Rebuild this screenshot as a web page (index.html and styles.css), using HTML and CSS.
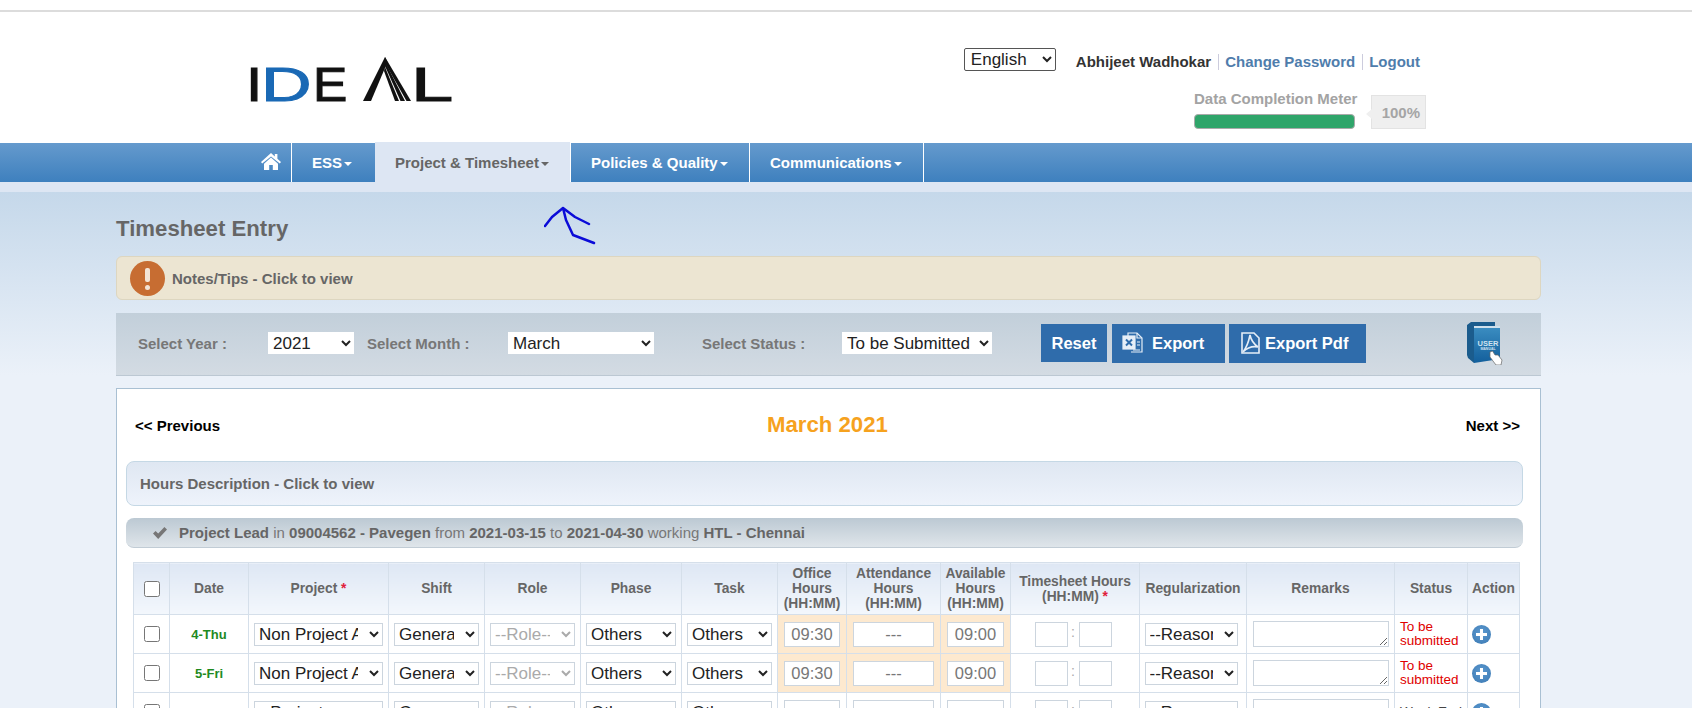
FILE: index.html
```html
<!DOCTYPE html>
<html>
	<head>
		<meta charset="utf-8">
		<title>Timesheet Entry</title>
		<link rel="stylesheet" href="styles.css">
	</head>
	<body>
		<div class="page">
			<div class="topline"></div>
			<div class="header">
				<div class="logo">
					<span class="lg lg-i">I</span>
					<span class="lg lg-d">D</span>
					<span class="lg lg-e">E</span>
					<!-- striped peak of the logo -->
					<svg class="lg-peak" width="49" height="44" viewBox="0 0 49 44">
						<path fill="#111" d="M23 0 L25.5 5 L9 44 H1 Z"/>
						<path fill="#111" d="M23 0 L49 44 H44.5 L22.5 5 Z"/>
						<path fill="#111" d="M23.5 5.5 L43 44 H38.5 L23 9 Z"/>
						<path fill="#111" d="M23 10 L37 44 H33 L22 14 Z"/>
					</svg>
					<span class="lg lg-l">L</span>
				</div>
				<div class="userbox">
					<div class="userrow">
						<select class="lang"><option>English</option></select>
						<span class="uname">Abhijeet Wadhokar</span>
						<a class="ulink" href="#">Change Password</a>
						<a class="ulink" href="#">Logout</a>
					</div>
					<div class="meter">
						<div class="meter-left">
							<div class="meter-label">Data Completion Meter</div>
							<div class="meter-bar"></div>
						</div>
						<div class="meter-val">100%</div>
					</div>
				</div>
			</div>

			<div class="nav">
				<a class="nav-home" href="#">
					<svg width="20" height="17" viewBox="0 0 20 17"><path fill="#fff" d="M10 0 L13.8 3.4 V1 H16.4 V5.7 L20 9 L18.8 10.6 L10 3.4 L1.2 10.6 L0 9 Z M3 10.8 L10 4.4 L17 10.8 V17 H11.8 V12 H8.2 V17 H3 Z"/></svg>
				</a>
				<a class="nav-item ess" href="#">ESS<i class="caret"></i></a>
				<a class="nav-item active" href="#">Project &amp; Timesheet<i class="caret"></i></a>
				<a class="nav-item policies" href="#">Policies &amp; Quality<i class="caret"></i></a>
				<a class="nav-item comm" href="#">Communications<i class="caret"></i></a>
			</div>
			<div class="strip"></div>

			<!-- hand drawn arrow on the screenshot -->
			<svg class="scribble" width="60" height="42" viewBox="0 0 60 42"><path fill="none" stroke="#0b0bd8" stroke-width="2.5" stroke-linejoin="round" stroke-linecap="round" d="M1 20 L8 11 L19 2 L31 11 L45 18 M19 2 L22 14 L29 29 L50 37"/></svg>

			<div class="content">
				<h1 class="title">Timesheet Entry</h1>

				<div class="notes">
					<span class="notes-icon"><i class="bang"></i><i class="dot"></i></span>
					<span>Notes/Tips - Click to view</span>
				</div>

				<div class="filter">
					<label class="flabel l1">Select Year :</label>
					<select class="fsel s1"><option>2021</option></select>
					<label class="flabel l2">Select Month :</label>
					<select class="fsel s2"><option>March</option></select>
					<label class="flabel l3">Select Status :</label>
					<select class="fsel s3"><option>To be Submitted</option></select>
					<button class="btn b-reset">Reset</button>
					<button class="btn b-export">
						<svg width="22" height="22" viewBox="0 0 22 22" fill="none" stroke="#e6eef7" stroke-width="1.2"><path d="M6 4 V1 H15 L20 6 V20 H9"/><path d="M15 1 V6 H20"/><rect x="1" y="4" width="12" height="13" fill="#e6eef7"/><path d="M4 7.5 L10 13.5 M10 7.5 L4 13.5" stroke="#2f6cab" stroke-width="2"/><path d="M15 10 H18 M15 13 H18 M11 18 H18"/></svg>
						Export
					</button>
					<button class="btn b-pdf">
						<svg width="19" height="22" viewBox="0 0 19 22" fill="none" stroke="#e6eef7" stroke-width="1.6"><path d="M1 1 H13 L18 6 V21 H1 Z"/><path d="M9 3 C8 8 6 15 2 20 C6 16 12 14 17 15 C13 12 10 8 9 3 Z"/></svg>
						Export Pdf
					</button>
					<svg class="book" width="36" height="44" viewBox="0 0 36 44">
						<defs>
							<linearGradient id="bookfront" x1="0" y1="0" x2="0" y2="1">
								<stop offset="0" stop-color="#3a8cc0"/>
								<stop offset="1" stop-color="#135f9c"/>
							</linearGradient>
						</defs>
						<path fill="#1b5c8d" d="M0 4 L4 1 H28 V5 L7 6 V42 L1 37 L0 34 Z"/>
						<path fill="#cfe0ec" d="M7 5 H33 V7 H7 Z"/>
						<path fill="url(#bookfront)" d="M7 7 H33 V38 L7 42 Z"/>
						<text x="21" y="25" class="book-text">USER</text>
						<text x="21" y="29" class="book-sub">MANUAL</text>
						<path fill="#fff" stroke="#666" stroke-width="0.7" d="M23 31 L25.5 30 L28 34 L31 34 L35 39 L34 44 L29 44 L23 36 Z"/>
					</svg>
				</div>

				<div class="panel">
					<div class="monthrow">
						<a class="mlink" href="#">&lt;&lt; Previous</a>
						<span class="month">March 2021</span>
						<a class="mlink" href="#">Next &gt;&gt;</a>
					</div>

					<div class="hours">Hours Description - Click to view</div>

					<div class="assign">
						<svg width="14" height="12" viewBox="0 0 14 12"><path fill="#777" d="M0 6.5 L2.6 4 L5.2 6.6 L11.4 0 L14 2.5 L5.2 12 Z"/></svg>
						<span><b>Project Lead</b> in <b>09004562 - Pavegen</b> from <b>2021-03-15</b> to <b>2021-04-30</b> working <b>HTL - Chennai</b></span>
					</div>

					<table class="tsheet">
						<thead>
							<tr>
								<th class="c-chk"><input type="checkbox"></th>
								<th class="c-date">Date</th>
								<th class="c-proj">Project <em>*</em></th>
								<th class="c-shift">Shift</th>
								<th class="c-role">Role</th>
								<th class="c-phase">Phase</th>
								<th class="c-task">Task</th>
								<th class="c-office">Office Hours (HH:MM)</th>
								<th class="c-att">Attendance Hours (HH:MM)</th>
								<th class="c-avail">Available Hours (HH:MM)</th>
								<th class="c-ts">Timesheet Hours (HH:MM) <em>*</em></th>
								<th class="c-reg">Regularization</th>
								<th class="c-rem">Remarks</th>
								<th class="c-status">Status</th>
								<th class="c-action">Action</th>
							</tr>
						</thead>
						<tbody>
							<tr>
								<td><input type="checkbox"></td>
								<td class="date green">4-Thu</td>
								<td><select class="tsel"><option>Non Project Activity</option></select></td>
								<td><select class="tsel"><option>General</option></select></td>
								<td><select class="tsel" disabled><option>--Role--</option></select></td>
								<td><select class="tsel"><option>Others</option></select></td>
								<td><select class="tsel"><option>Others</option></select></td>
								<td class="warm"><input class="box" value="09:30"></td>
								<td class="warm"><input class="box" value="---"></td>
								<td class="warm"><input class="box" value="09:00"></td>
								<td class="tcell"><input class="box small"><span class="colon">:</span><input class="box small"></td>
								<td><select class="tsel reason"><option>--Reason--</option></select></td>
								<td><textarea class="rem"></textarea></td>
								<td class="status red">To be submitted</td>
								<td class="act"><span class="plus"></span></td>
							</tr>
							<tr>
								<td><input type="checkbox"></td>
								<td class="date green">5-Fri</td>
								<td><select class="tsel"><option>Non Project Activity</option></select></td>
								<td><select class="tsel"><option>General</option></select></td>
								<td><select class="tsel" disabled><option>--Role--</option></select></td>
								<td><select class="tsel"><option>Others</option></select></td>
								<td><select class="tsel"><option>Others</option></select></td>
								<td class="warm"><input class="box" value="09:30"></td>
								<td class="warm"><input class="box" value="---"></td>
								<td class="warm"><input class="box" value="09:00"></td>
								<td class="tcell"><input class="box small"><span class="colon">:</span><input class="box small"></td>
								<td><select class="tsel reason"><option>--Reason--</option></select></td>
								<td><textarea class="rem"></textarea></td>
								<td class="status red">To be submitted</td>
								<td class="act"><span class="plus"></span></td>
							</tr>
							<tr>
								<td><input type="checkbox"></td>
								<td class="date red">6-Sat</td>
								<td><select class="tsel"><option>--Project--</option></select></td>
								<td><select class="tsel"><option>General</option></select></td>
								<td><select class="tsel" disabled><option>--Role--</option></select></td>
								<td><select class="tsel"><option>Others</option></select></td>
								<td><select class="tsel"><option>Others</option></select></td>
								<td><input class="box"></td>
								<td><input class="box"></td>
								<td><input class="box"></td>
								<td class="tcell"><input class="box small"><span class="colon">:</span><input class="box small"></td>
								<td><select class="tsel reason"><option>--Reason--</option></select></td>
								<td><textarea class="rem"></textarea></td>
								<td class="status">Week End</td>
								<td class="act"><span class="plus"></span></td>
							</tr>
						</tbody>
					</table>
				</div>
			</div>
		</div>
	</body>
</html>
```

FILE: styles.css
```css
* {
	box-sizing: border-box;
}
html, body {
	margin: 0;
	padding: 0;
	height: 708px;
	overflow: hidden;
}
body {
	font-family: "Liberation Sans", Arial, sans-serif;
	background: #fff;
}
a {
	text-decoration: none;
}
.page {
	position: relative;
	height: 708px;
	overflow: hidden;
	background: linear-gradient(#c5d8ea 192px, #ebf1f9 375px);
}
.topline {
	height: 12px;
	background: #fff;
	border-bottom: 2px solid #dcdcdc;
}

/* header */
.header {
	height: 131px;
	background: #fff;
	display: flex;
	padding-left: 246px;
	padding-right: 266px;
}
.logo {
	display: flex;
	align-items: flex-start;
	height: 44px;
	margin-top: 45px;
}
.lg {
	display: block;
	margin-top: 5px;
	font-size: 49px;
	line-height: 44px;
	color: #111;
	-webkit-text-stroke: 1px currentColor;
	transform-origin: left center;
}
.lg-i {
	width: 15px;
	transform: scaleX(1.2);
}
.lg-d {
	width: 52px;
	color: #1a69b5;
	transform: scaleX(1.43);
}
.lg-e {
	width: 49px;
	transform: scaleX(1.05);
}
.lg-peak {
	display: block;
}
.lg-l {
	transform: scaleX(1.55);
}
.userbox {
	margin-left: auto;
	display: flex;
	flex-direction: column;
	align-items: flex-end;
}
.userrow {
	display: flex;
	align-items: center;
	height: 24px;
	margin-top: 35px;
	margin-right: 6px;
}
.lang {
	width: 92px;
	height: 23px;
	font: 17px "Liberation Sans", sans-serif;
	margin-right: 20px;
	border: 1px solid #555;
	border-radius: 2px;
	background: #fff;
	color: #222;
	padding: 0 0 0 2px;
}
.uname, .ulink {
	font-size: 15px;
	font-weight: bold;
	line-height: 16px;
	margin-top: 5px;
}
.uname {
	color: #333;
}
.ulink {
	color: #4f7dac;
	border-left: 1px solid #ccd;
	margin-left: 7px;
	padding-left: 6px;
}
.meter {
	display: flex;
	margin-top: 24px;
}
.meter-left {
	width: 163px;
	margin-top: -5px;
}
.meter-label {
	font-size: 15px;
	font-weight: bold;
	color: #a3a3a3;
	line-height: 18px;
	white-space: nowrap;
}
.meter-bar {
	width: 161px;
	height: 15px;
	margin-top: 6px;
	background: #2fa56a;
	border: 1px solid #aaa;
	border-radius: 4px;
}
.meter-val {
	position: relative;
	width: 55px;
	height: 34px;
	margin-left: 14px;
	background: #efefef;
	border: 1px solid #e3e3e3;
	font-size: 15px;
	font-weight: bold;
	color: #a5a5a5;
	line-height: 34px;
	text-align: right;
	padding-right: 5px;
}
.meter-val::before {
	content: "";
	position: absolute;
	left: -6px;
	top: 13px;
	border: 5px solid transparent;
	border-left: 0;
	border-right: 6px solid #efefef;
}

/* nav */
.nav {
	height: 39px;
	background: linear-gradient(#659acd, #3e80be);
	display: flex;
	padding-left: 252px;
}
.nav-home {
	width: 40px;
	border-right: 1px solid #fff;
	padding-left: 9px;
	padding-top: 10px;
}
.nav-item {
	display: block;
	color: #fff;
	font-size: 15px;
	font-weight: bold;
	line-height: 39px;
	padding-left: 20px;
	border-right: 1px solid #fff;
	white-space: nowrap;
}
.ess {
	width: 83px;
	border-right: 0;
}
.active {
	width: 195px;
	height: 50px;
	margin-top: -1px;
	line-height: 41px;
	background: #dde6f3;
	color: #666;
	border-right: 0;
}
.policies {
	width: 180px;
	border-left: 1px solid #fff;
}
.comm {
	width: 174px;
}
.caret {
	display: inline-block;
	vertical-align: middle;
	margin-left: 2px;
	border: 4px solid transparent;
	border-top: 4px solid #fff;
	border-bottom: 0;
}
.active .caret {
	border-top-color: #666;
}
.strip {
	height: 10px;
	background: #dde6f3;
}
.scribble {
	position: absolute;
	left: 544px;
	top: 206px;
}

/* main */
.content {
	width: 1425px;
	margin-left: 116px;
}
.title {
	margin: 0;
	padding-top: 24px;
	height: 64px;
	font-size: 22.2px;
	line-height: 26px;
	color: #666;
}
.notes {
	height: 44px;
	display: flex;
	align-items: center;
	padding-left: 13px;
	background: #ece5d2;
	border: 1px solid #ddd6c0;
	border-radius: 6px;
	font-size: 15px;
	font-weight: bold;
	color: #666;
}
.notes-icon {
	position: relative;
	width: 35px;
	height: 35px;
	margin-right: 7px;
	border-radius: 50%;
	background: #c76d32;
}
.bang {
	position: absolute;
	left: 15px;
	top: 7px;
	width: 5px;
	height: 14px;
	border-radius: 2px;
	background: #f3e4d6;
}
.dot {
	position: absolute;
	left: 15px;
	top: 24px;
	width: 5px;
	height: 5px;
	border-radius: 50%;
	background: #f3e4d6;
}
.filter {
	height: 63px;
	margin-top: 13px;
	display: flex;
	align-items: center;
	padding-left: 22px;
	padding-right: 38px;
	padding-bottom: 2px;
	background: linear-gradient(#c2cfda, #d3dbe3);
	border-bottom: 1px solid #bcc8d3;
}
.flabel {
	font-size: 15px;
	font-weight: bold;
	color: #777;
}
.l1 {
	width: 130px;
}
.l2 {
	width: 141px;
	margin-left: 13px;
}
.l3 {
	width: 140px;
	margin-left: 48px;
}
.fsel {
	height: 22px;
	border: 0;
	background: #fff;
	font: 17px "Liberation Sans", sans-serif;
	color: #222;
	padding: 0 0 0 1px;
}
.s1 {
	width: 86px;
}
.s2 {
	width: 146px;
}
.s3 {
	width: 150px;
}
.btn {
	height: 39px;
	border: 0;
	background: #2f6cab;
	color: #fff;
	font: bold 16.5px "Liberation Sans", sans-serif;
	padding: 0;
	display: flex;
	align-items: center;
}
.b-reset {
	width: 66px;
	height: 38px;
	margin-left: 49px;
	justify-content: center;
}
.b-export {
	width: 113px;
	margin-left: 5px;
	padding-left: 10px;
	gap: 8px;
}
.b-pdf {
	width: 137px;
	margin-left: 4px;
	padding-left: 12px;
	gap: 5px;
}
.book {
	margin-left: auto;
}
.book-text {
	font: bold 7.5px "Liberation Sans", sans-serif;
	fill: #cfe3f0;
	text-anchor: middle;
}
.book-sub {
	font: bold 3.5px "Liberation Sans", sans-serif;
	fill: #cfe3f0;
	text-anchor: middle;
}
.panel {
	margin-top: 12px;
	height: 400px;
	background: #fff;
	border: 1px solid #a9c0d3;
	padding-left: 9px;
	padding-right: 17px;
}
.monthrow {
	height: 72px;
	padding-left: 9px;
	padding-right: 3px;
	display: flex;
	justify-content: space-between;
	align-items: center;
}
.mlink {
	color: #000;
	font-size: 15px;
	font-weight: bold;
}
.month {
	font-size: 22.2px;
	font-weight: bold;
	color: #f6a21e;
	margin-right: 31px;
}
.hours {
	height: 45px;
	line-height: 43px;
	padding-left: 13px;
	background: linear-gradient(#dfe7f2, #eef3fb);
	border: 1px solid #c5d8e5;
	border-radius: 8px;
	font-size: 15px;
	font-weight: bold;
	color: #666;
}
.assign {
	height: 30px;
	margin-top: 12px;
	display: flex;
	align-items: center;
	gap: 12px;
	padding-left: 27px;
	background: linear-gradient(#bcc9d3, #dfe5ea);
	border-bottom: 1px solid #c1ccd5;
	border-radius: 8px;
	font-size: 15px;
	color: #777;
}
.assign b {
	color: #666;
}

/* table */
.tsheet {
	width: 1386px;
	margin-top: 14px;
	margin-left: 7px;
	table-layout: fixed;
	border-collapse: collapse;
}
.tsheet th {
	height: 52px;
	padding: 0;
	background: linear-gradient(#dee7f4, #f3f7fc);
	border: 1px solid #d5dfea;
	font-size: 13.8px;
	line-height: 15px;
	font-weight: bold;
	color: #666;
	text-align: center;
}
.tsheet th em {
	color: #e0203c;
	font-style: normal;
}
.tsheet td {
	height: 39px;
	padding: 0;
	border: 1px solid #d5dfea;
	text-align: center;
	font-size: 13px;
}
.tsheet input[type=checkbox] {
	width: 16px;
	height: 16px;
	margin: 0;
	vertical-align: middle;
}
.c-chk { width: 36px; }
.c-date { width: 79px; }
.c-proj { width: 140px; }
.c-shift { width: 96px; }
.c-role { width: 96px; }
.c-phase { width: 101px; }
.c-task { width: 96px; }
.c-office { width: 69px; }
.c-att { width: 94px; }
.c-avail { width: 70px; }
.c-ts { width: 129px; }
.c-reg { width: 107px; }
.c-rem { width: 148px; }
.c-status { width: 73px; }
.c-action { width: 52px; }

.date {
	font-weight: bold;
}
.green {
	color: #1f8a1f;
}
.red {
	color: #e00000;
}
.tsel {
	width: calc(100% - 10px);
	height: 23px;
	font: 17px "Liberation Sans", sans-serif;
	color: #222;
	background: #fff;
	border: 1px solid #ccd5de;
	padding: 0 8px 0 0;
	vertical-align: middle;
}
.tsel.reason {
	width: 93px;
	margin-right: 4px;
}
.tsel:disabled {
	color: #aaa;
	opacity: 1;
	background: #fff;
}
.box {
	width: calc(100% - 12px);
	height: 25px;
	border: 1px solid #ccd5de;
	background: #fff;
	font: 16.5px "Liberation Sans", sans-serif;
	color: #777;
	text-align: center;
	padding: 0;
	vertical-align: middle;
}
.box.small {
	width: 33px;
}
.tcell {
	padding-right: 4px !important;
}
.colon {
	display: inline-block;
	width: 11px;
	color: #aaa;
	font-size: 14px;
}
.warm {
	background: #fde9cf;
}
.rem {
	display: block;
	width: 136px;
	height: 26px;
	margin: 0 auto;
	border: 1px solid #ccd5de;
	background: #fff;
	padding: 0;
}
.status {
	text-align: left !important;
	padding-left: 5px !important;
	font-size: 13.5px !important;
	line-height: 14px;
	color: #444;
}
.status.red {
	color: #e00000;
}
.act {
	text-align: left !important;
	padding-left: 4px !important;
}
.plus {
	display: block;
	position: relative;
	width: 19px;
	height: 19px;
	border-radius: 50%;
	background: radial-gradient(circle at 50% 40%, #5d9ad0, #3a78b2);
}
.plus::before {
	content: "";
	position: absolute;
	left: 4px;
	top: 8px;
	width: 11px;
	height: 3px;
	background: #fff;
}
.plus::after {
	content: "";
	position: absolute;
	left: 8px;
	top: 4px;
	width: 3px;
	height: 11px;
	background: #fff;
}
```
